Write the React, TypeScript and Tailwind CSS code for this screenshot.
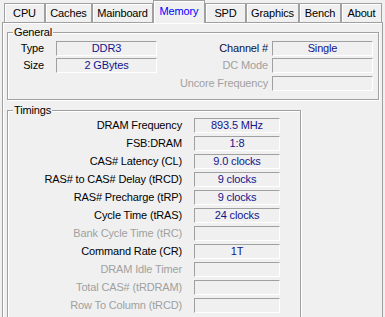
import React from "react";

type Tab = { name: string; w: string; active?: boolean };

const tabs: Tab[] = [
	{ name: "CPU", w: "w-[41px]" },
	{ name: "Caches", w: "w-[47px]" },
	{ name: "Mainboard", w: "w-[61px]" },
	{ name: "Memory", w: "w-[52px]", active: true },
	{ name: "SPD", w: "w-[41px]" },
	{ name: "Graphics", w: "w-[53px]" },
	{ name: "Bench", w: "w-[42px]" },
	{ name: "About", w: "w-[41px]" },
];

type Timing = { label: string; value: string; enabled: boolean };

const timings: Timing[] = [
	{ label: "DRAM Frequency", value: "893.5 MHz", enabled: true },
	{ label: "FSB:DRAM", value: "1:8", enabled: true },
	{ label: "CAS# Latency (CL)", value: "9.0 clocks", enabled: true },
	{ label: "RAS# to CAS# Delay (tRCD)", value: "9 clocks", enabled: true },
	{ label: "RAS# Precharge (tRP)", value: "9 clocks", enabled: true },
	{ label: "Cycle Time (tRAS)", value: "24 clocks", enabled: true },
	{ label: "Bank Cycle Time (tRC)", value: "", enabled: false },
	{ label: "Command Rate (CR)", value: "1T", enabled: true },
	{ label: "DRAM Idle Timer", value: "", enabled: false },
	{ label: "Total CAS# (tRDRAM)", value: "", enabled: false },
	{ label: "Row To Column (tRCD)", value: "", enabled: false },
];

// sunken read-only field
function Field({ value, w }: { value: string; w: string }) {
	return (
		<div
			className={`${w} h-[15px] shrink-0 flex items-center justify-center border border-t-[#a0a0a0] border-l-[#a0a0a0] border-b-white border-r-white text-[#14148c]`}
		>
			{value}
		</div>
	);
}

// etched group box with legend
function Group({ title, className, children }: { title: string; className: string; children: React.ReactNode }) {
	return (
		<div className={`relative border border-[#a0a0a0] shadow-[inset_1px_1px_0_#fff,1px_1px_0_#fff] ${className}`}>
			<span className="absolute -top-[7px] left-[5px] px-[1px] bg-[#f0f0f0] leading-[13px]">{title}</span>
			{children}
		</div>
	);
}

export default function App() {
	return (
		<div className="w-[385px] h-[317px] overflow-hidden bg-[#f0f0f0] text-[11px] leading-none tracking-[-0.15px] text-black font-['Liberation_Sans',Arial,sans-serif]">
			{/* Tab strip */}
			<div className="relative z-10 flex h-[22px] items-end pl-[4px]">
				{tabs.map((t) =>
					t.active ? (
						<div
							key={t.name}
							className={`${t.w} h-[23px] -mb-px flex items-center justify-center pb-[2px] border border-b-0 border-[#a0a0a0] bg-[#f0f0f0] shadow-[inset_1px_1px_0_#fff] text-[#0000ff]`}
						>
							{t.name}
						</div>
					) : (
						<div
							key={t.name}
							className={`${t.w} h-[19px] flex items-center justify-center border border-b-0 border-[#a0a0a0] shadow-[inset_1px_1px_0_#fff]`}
						>
							{t.name}
						</div>
					),
				)}
			</div>

			{/* Tab panel */}
			<div className="ml-[2px] w-[381px] h-[300px] border border-[#a0a0a0] shadow-[inset_1px_1px_0_#fff] pt-[9px] pl-[4px]">
				<Group title="General" className="w-[372px] h-[68px] pt-[8px] flex flex-col gap-[2px]">
					<div className="flex items-center h-[15px]">
						<span className="w-[36px] text-right">Type</span>
						<div className="ml-[12px]"><Field value="DDR3" w="w-[101px]" /></div>
						<span className="w-[111px] text-right text-[#10103a]">Channel #</span>
						<div className="ml-[4px]"><Field value="Single" w="w-[101px]" /></div>
					</div>
					<div className="flex items-center h-[15px]">
						<span className="w-[36px] text-right">Size</span>
						<div className="ml-[12px]"><Field value="2 GBytes" w="w-[101px]" /></div>
						<span className="w-[111px] text-right text-[#a0a0a0]">DC Mode</span>
						<div className="ml-[4px]"><Field value="" w="w-[101px]" /></div>
					</div>
					<div className="flex items-center h-[15px] mt-px">
						<span className="w-[36px]" />
						<div className="ml-[12px] w-[101px]" />
						<span className="w-[111px] text-right text-[#a0a0a0]">Uncore Frequency</span>
						<div className="ml-[4px]"><Field value="" w="w-[101px]" /></div>
					</div>
				</Group>

				<Group title="Timings" className="mt-[10px] w-[294px] h-[230px] pt-[7px] flex flex-col gap-[3px]">
					{timings.map((r) => (
						<div key={r.label} className="flex items-center h-[15px]">
							<span className={`w-[174px] text-right ${r.enabled ? "text-black" : "text-[#a0a0a0]"}`}>
								{r.label}
							</span>
							<div className="ml-[12px]"><Field value={r.value} w="w-[86px]" /></div>
						</div>
					))}
				</Group>
			</div>
		</div>
	);
}
